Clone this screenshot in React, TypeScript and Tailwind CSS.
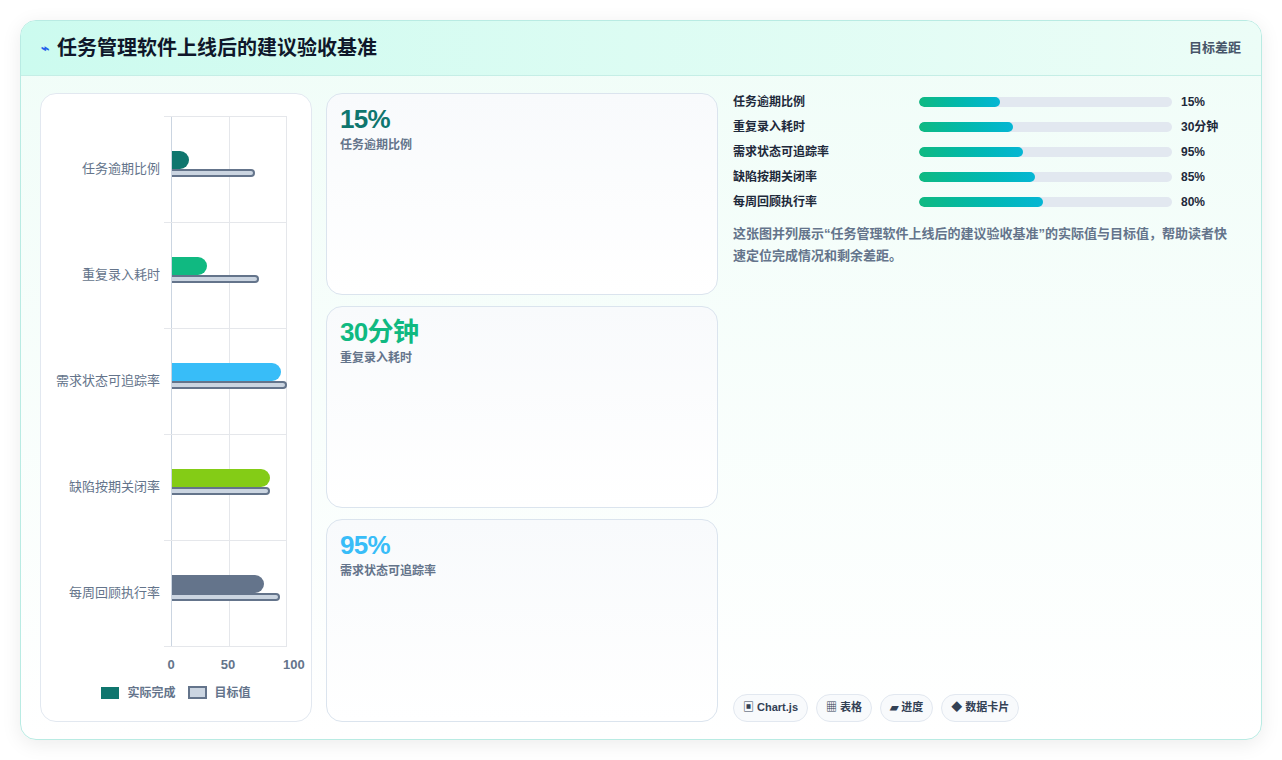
const font = { fontFamily: '"Liberation Sans", "Noto Sans CJK SC", sans-serif' };

const rows = [
  { label: "任务逾期比例", actual: 15, target: 72, color: "bg-[#0f766e]" },
  { label: "重复录入耗时", actual: 30, target: 76, color: "bg-[#10b981]" },
  { label: "需求状态可追踪率", actual: 95, target: 100, color: "bg-[#38bdf8]" },
  { label: "缺陷按期关闭率", actual: 85, target: 85, color: "bg-[#84cc16]" },
  { label: "每周回顾执行率", actual: 80, target: 94, color: "bg-[#64748b]" },
];

const progress = [
  { label: "任务逾期比例", v: "15%", w: 32 },
  { label: "重复录入耗时", v: "30分钟", w: 37 },
  { label: "需求状态可追踪率", v: "95%", w: 41 },
  { label: "缺陷按期关闭率", v: "85%", w: 46 },
  { label: "每周回顾执行率", v: "80%", w: 49 },
];

const cards = [
  { v: "15%", label: "任务逾期比例", c: "text-[#0f766e]" },
  { v: "30分钟", label: "重复录入耗时", c: "text-[#10b981]" },
  { v: "95%", label: "需求状态可追踪率", c: "text-[#38bdf8]" },
];

export default function App() {
  return (
    <div className="w-[1282px] h-[760px] bg-white p-5" style={font}>
      <div className="h-[720px] rounded-2xl border border-[#b9ebe3] bg-gradient-to-b from-[#f0fdf8] to-white shadow-[0_4px_20px_rgba(0,0,0,0.08)] flex flex-col overflow-hidden">
        <div className="h-[55px] shrink-0 flex items-center justify-between px-5 bg-gradient-to-r from-[#ccfbef] to-[#ecfdf7] border-b border-[#c5eee6]">
          <div className="flex items-center gap-2">
            <span className="text-[#2563eb] text-sm font-bold">⌁</span>
            <h1 className="text-xl font-bold text-[#0f172a]">任务管理软件上线后的建议验收基准</h1>
          </div>
          <span className="text-[13px] font-semibold text-[#475569]">目标差距</span>
        </div>
        <div className="flex-1 flex gap-[14px] px-[19px] pt-[17px] pb-[18px]">
          <div className="w-[272px] shrink-0 bg-white rounded-2xl border border-[#e2e8f0] flex flex-col pt-[22px] pb-[20px]">
            <div className="flex">
              <div className="w-[130px] flex flex-col">
                {rows.map((r) => (
                  <div key={r.label} className="h-[106px] flex items-center justify-end pr-[11px] text-[13px] text-[#64748b]">{r.label}</div>
                ))}
              </div>
              <div className="relative w-[116px] h-[531px] border-l border-[#cbd5e1]">
                <div className="absolute inset-y-0 left-[57px] border-l border-[#e5e7eb]" />
                <div className="absolute inset-y-0 right-0 border-l border-[#e5e7eb]" />
                {rows.map((r, i) => (
                  <div key={r.label} className="absolute left-0 right-0" style={{ top: i * 106 }}>
                    <div className="border-t border-[#e5e7eb] -ml-2" />
                    <div className="absolute left-0" style={{ top: 35 }}>
                      <div className={`h-[18px] rounded-r-full ${r.color}`} style={{ width: r.actual * 1.15 }} />
                      <div className="h-[8px] rounded-r-full bg-[#cbd5e1] border-2 border-[#64748b] border-l-0" style={{ width: r.target * 1.15 }} />
                    </div>
                  </div>
                ))}
                <div className="absolute left-0 right-0 bottom-0 border-t border-[#e5e7eb] -ml-2" />
              </div>
            </div>
            <div className="flex pl-[120px] w-[262px] justify-between text-[13px] font-bold text-[#64748b] mt-2">
              <span className="w-5 text-center">0</span>
              <span className="w-5 text-center -ml-2">50</span>
              <span className="w-5 text-center">100</span>
            </div>
            <div className="flex items-center justify-center gap-2 mt-[10px] text-xs font-bold text-[#64748b]">
              <span className="w-[18px] h-[12px] bg-[#0f766e]" />
              <span>实际完成</span>
              <span className="w-[19px] h-[13px] bg-[#cbd5e1] border-2 border-[#64748b] ml-1" />
              <span>目标值</span>
            </div>
          </div>
          <div className="w-[392px] shrink-0 flex flex-col gap-[11px]">
            {cards.map((c) => (
              <div key={c.label} className="flex-1 rounded-2xl border border-[#dbe4ee] bg-gradient-to-b from-[#f8fafc] to-white px-[13px] pt-[10px]">
                <div className={`text-[26px] leading-[30px] font-bold tracking-tight ${c.c}`}>{c.v}</div>
                <div className="text-xs font-bold text-[#64748b] mt-[3px]">{c.label}</div>
              </div>
            ))}
          </div>
          <div className="flex-1 flex flex-col pl-[1px] pr-1">
            <div className="flex flex-col gap-[7px]">
              {progress.map((p) => (
                <div key={p.label} className="flex items-center h-[18px] text-xs font-bold text-[#1e293b]">
                  <span className="w-[186px]">{p.label}</span>
                  <div className="w-[253px] h-[10px] rounded-full bg-[#e2e8f0] overflow-hidden">
                    <div className="h-full rounded-full bg-gradient-to-r from-[#10b981] to-[#06b6d4]" style={{ width: `${p.w}%` }} />
                  </div>
                  <span className="ml-[9px]">{p.v}</span>
                </div>
              ))}
            </div>
            <p className="mt-[12px] text-[13px] leading-[22px] font-bold text-[#64748b]">这张图并列展示“任务管理软件上线后的建议验收基准”的实际值与目标值，帮助读者快速定位完成情况和剩余差距。</p>
            <div className="mt-auto flex gap-2 text-[11px] font-bold text-[#334155]">
              {["▣ Chart.js", "▦ 表格", "▰ 进度", "◆ 数据卡片"].map((t) => (
                <span key={t} className="h-[28px] px-[9px] flex items-center rounded-full border border-[#e2e8f0] bg-[#f8fafc]">{t}</span>
              ))}
            </div>
          </div>
        </div>
      </div>
    </div>
  );
}
